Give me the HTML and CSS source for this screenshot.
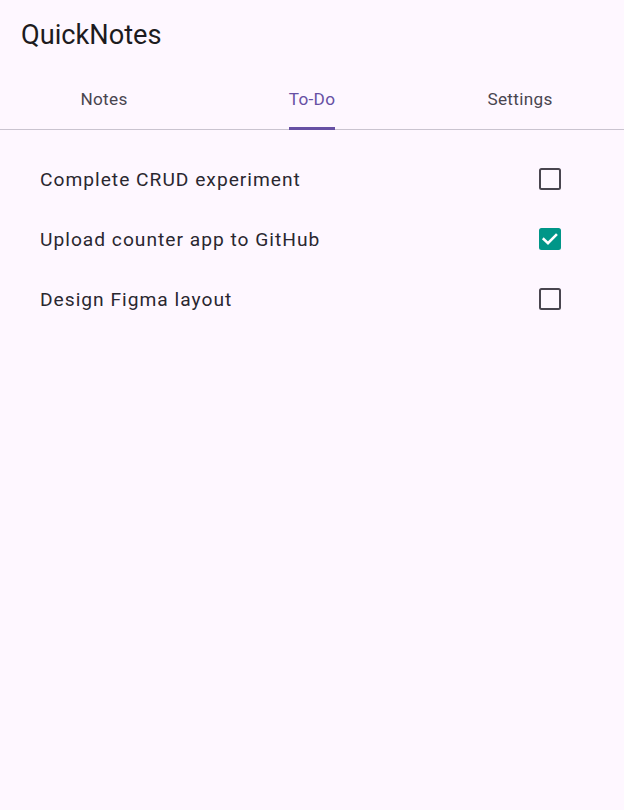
FILE: index.html
```html
<!DOCTYPE html>
<html lang="en">
<head>
<meta charset="utf-8">
<title>QuickNotes</title>
<link rel="stylesheet" href="styles.css">
</head>
<body>
<div class="app">
  <header class="appbar">
    <h1 class="title">QuickNotes</h1>
  </header>
  <nav class="tabs">
    <div class="tab"><span class="tab-label">Notes</span></div>
    <div class="tab active"><span class="tab-label">To-Do</span></div>
    <div class="tab"><span class="tab-label">Settings</span></div>
  </nav>
  <main class="list">
    <div class="row">
      <span class="row-text">Complete CRUD experiment</span>
      <span class="checkbox"></span>
    </div>
    <div class="row">
      <span class="row-text">Upload counter app to GitHub</span>
      <span class="checkbox checked">
        <svg viewBox="0 0 24 24" width="22" height="22"><path d="M5.2 12.2 L9.8 16.6 L18.6 7.6" fill="none" stroke="#ffffff" stroke-width="2.8" stroke-linecap="square"/></svg>
      </span>
    </div>
    <div class="row">
      <span class="row-text">Design Figma layout</span>
      <span class="checkbox"></span>
    </div>
  </main>
</div>
</body>
</html>
```
FILE: styles.css
```css
html, body {
  margin: 0;
  padding: 0;
  background: #fef7ff;
}
body {
  font-family: Roboto, "Noto Sans", sans-serif;
  color: #1d1b20;
}
.app {
  width: 624px;
  height: 810px;
  background: #fef7ff;
}
.appbar {
  height: 72px;
  display: flex;
  align-items: center;
  padding: 0 21px;
  box-sizing: border-box;
}
.title {
  margin: 0;
  font-weight: 400;
  font-size: 27.2px;
  color: #1d1b20;
  line-height: 1;
}
.tabs {
  display: grid;
  grid-template-columns: 1fr 1fr 1fr;
  height: 58px;
  border-bottom: 1px solid #cac4d0;
  box-sizing: border-box;
}
.tab {
  display: flex;
  justify-content: center;
  align-items: stretch;
}
.tab-label {
  display: flex;
  align-items: center;
  font-size: 17.2px;
  letter-spacing: 0.3px;
  color: #49454f;
  padding-bottom: 2px;
  box-sizing: border-box;
  border-bottom: 3px solid transparent;
  margin-bottom: -1px;
  border-radius: 3px 3px 0 0;
}
.tab.active .tab-label {
  color: #6750a4;
  border-bottom-color: #6750a4;
}
.list {
  padding: 19px 0 0;
}
.row {
  display: flex;
  align-items: center;
  justify-content: space-between;
  height: 60px;
  padding: 0 63px 0 40px;
}
.row-text {
  font-size: 19.2px;
  letter-spacing: 1px;
  color: #2a2730;
}
.checkbox {
  width: 22px;
  height: 22px;
  box-sizing: border-box;
  border: 2.5px solid #49454f;
  border-radius: 2.5px;
  display: flex;
  align-items: center;
  justify-content: center;
}
.checkbox.checked {
  background: #009688;
  border-color: #009688;
}
.checkbox svg {
  flex: none;
}
```
